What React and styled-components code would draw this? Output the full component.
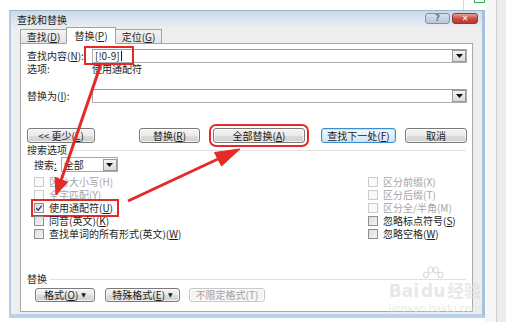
import styled, { createGlobalStyle } from 'styled-components';

const GlobalStyle = createGlobalStyle`
  html, body {
    margin: 0;
    padding: 0;
    background: #ffffff;
  }
  body {
    font-family: "Noto Sans CJK SC", "Noto Sans", sans-serif;
    font-size: 10px;
    color: #1e1e1e;
  }
`;

const leftChecks = [
  { text: '区分大小写', key: 'H', disabled: true },
  { text: '全字匹配', key: 'Y', disabled: true },
  { text: '使用通配符', key: 'U', checked: true, marked: true },
  { text: '同音(英文)', key: 'K' },
  { text: '查找单词的所有形式(英文)', key: 'W' },
];

const rightChecks = [
  { text: '区分前缀', key: 'X', disabled: true },
  { text: '区分后缀', key: 'T', disabled: true },
  { text: '区分全/半角', key: 'M', disabled: true },
  { text: '忽略标点符号', key: 'S' },
  { text: '忽略空格', key: 'W' },
];

const Check = ({ item }) => (
  <CheckRow $disabled={item.disabled} $marked={item.marked}>
    <Box $disabled={item.disabled}>{item.checked ? <Tick /> : null}</Box>
    <span>
      {item.text}(
      {item.disabled ? item.key : <u>{item.key}</u>})
    </span>
  </CheckRow>
);

const Tick = () => (
  <svg width="8" height="8" viewBox="0 0 8 8">
    <path d="M1.2 4.2 L3.2 6.2 L6.8 1.6" fill="none" stroke="#2b3f6b" strokeWidth="1.3" />
  </svg>
);

const DropButton = () => (
  <Drop>
    <svg width="7" height="4" viewBox="0 0 7 4">
      <path d="M0 0 H7 L3.5 4 Z" fill="#111" />
    </svg>
  </Drop>
);

const App = () => {
  return (
    <Page>
      <GlobalStyle />
      <LeftGap />
      <Center>
        <TopStrip>
          <StripLine />
          <GreenMark />
        </TopStrip>

        <Window>
          <TitleBar>
            <Title>查找和替换</Title>
            <Caption>
              <HelpBtn>?</HelpBtn>
              <CloseBtn>✕</CloseBtn>
            </Caption>
          </TitleBar>

          <Client>
            <Tabs>
              <Tab>
                查找(<u>D</u>)
              </Tab>
              <Tab $active>
                替换(<u>P</u>)
              </Tab>
              <Tab>
                定位(<u>G</u>)
              </Tab>
            </Tabs>

            <Panel>
              <FieldRow $top={5}>
                <FieldLabel>
                  查找内容(<u>N</u>):
                </FieldLabel>
                <Combo>
                  <ComboText>
                    <Marked>[!0-9]</Marked>
                    <Caret />
                  </ComboText>
                  <DropButton />
                </Combo>
              </FieldRow>

              <OptionsRow>
                <FieldLabel>选项:</FieldLabel>
                <OptionValue>使用通配符</OptionValue>
              </OptionsRow>

              <FieldRow $top={14}>
                <FieldLabel>
                  替换为(<u>I</u>):
                </FieldLabel>
                <Combo>
                  <ComboText />
                  <DropButton />
                </Combo>
              </FieldRow>

              <ButtonRow>
                <Button $w={68}>
                  &lt;&lt; 更少(<u>L</u>)
                </Button>
                <Button $w={61} $gap={44}>
                  替换(<u>R</u>)
                </Button>
                <Button $w={92} $gap={13} $marked>
                  全部替换(<u>A</u>)
                </Button>
                <Button $w={75} $gap={16} $default>
                  查找下一处(<u>F</u>)
                </Button>
                <Button $w={62} $gap={9}>
                  取消
                </Button>
              </ButtonRow>

              <Section $top={1}>
                <span>搜索选项</span>
              </Section>

              <SearchRow>
                <span>
                  搜索<u>:</u>
                </span>
                <Select>
                  <SelectText>全部</SelectText>
                  <DropButton />
                </Select>
              </SearchRow>

              <CheckGrid>
                {leftChecks.map((item, i) => (
                  <Pair key={item.text}>
                    <Check item={item} />
                    <Check item={rightChecks[i]} />
                  </Pair>
                ))}
              </CheckGrid>

              <Section $top={33}>
                <span>替换</span>
              </Section>

              <BottomRow>
                <Button $w={60} $h={14}>
                  格式(<u>O</u>) <Arrow>▼</Arrow>
                </Button>
                <Button $w={75} $h={14} $gap={10}>
                  特殊格式(<u>E</u>) <Arrow>▼</Arrow>
                </Button>
                <Button $w={76} $h={14} $gap={9} $disabled>
                  不限定格式(T)
                </Button>
              </BottomRow>
            </Panel>
          </Client>
        </Window>
      </Center>

      <RightStrip>
        <RightLight />
        <RightLine />
        <RightGray />
      </RightStrip>

      <Watermark>
        <MarkTop>
          <span>Bai</span>
          <Paw>
            <svg width="26" height="16" viewBox="0 0 26 16">
              <g fill="none" stroke="#d2d2d2" strokeWidth="1">
                <ellipse cx="6" cy="9" rx="2.5" ry="3" />
                <ellipse cx="10.5" cy="4" rx="2.5" ry="3.2" />
                <ellipse cx="16" cy="4" rx="2.5" ry="3.2" />
                <ellipse cx="20.5" cy="9" rx="2.5" ry="3" />
              </g>
            </svg>
            <span>du</span>
          </Paw>
          <span>经验</span>
        </MarkTop>
        <MarkUrl>jingyan.baidu.com</MarkUrl>
      </Watermark>

      <Arrows width="506" height="322" viewBox="0 0 506 322">
        <g fill="#e52a26" stroke="#e52a26">
          <line x1="101" y1="64" x2="61.2" y2="180" strokeWidth="3" />
          <polygon points="56,195 67.5,182 55,177.5" strokeWidth="1" />
          <line x1="128" y1="201" x2="218" y2="159" strokeWidth="3" />
          <polygon points="240,149 221.5,166 214.5,152.5" strokeWidth="1" />
        </g>
      </Arrows>
    </Page>
  );
};

export default App;

const Page = styled.div`
  position: relative;
  width: 506px;
  height: 322px;
  display: flex;
  overflow: hidden;
  background: #ffffff;
`;

const LeftGap = styled.div`
  width: 9px;
  flex: none;
`;

const Center = styled.div`
  width: 476px;
  flex: none;
  display: flex;
  flex-direction: column;
`;

const TopStrip = styled.div`
  height: 10px;
  display: flex;
  align-items: flex-start;
  padding-left: 454px;
`;

const StripLine = styled.div`
  width: 1px;
  height: 10px;
  background: #d6d6d6;
`;

const GreenMark = styled.div`
  margin-left: 10px;
  width: 9px;
  height: 2px;
  border: 1px solid #36b152;
  border-top: none;
`;

const Window = styled.div`
  height: 308px;
  box-sizing: border-box;
  border: 1px solid #8fa9c9;
  border-top-color: #9db4cf;
  border-bottom: 4px solid #bcd2ec;
  border-left: 2px solid #b4cbe6;
  border-right: 3px solid #a8c1df;
  background: #eeeeee;
  display: flex;
  flex-direction: column;
`;

const TitleBar = styled.div`
  height: 16px;
  display: flex;
  align-items: center;
  justify-content: space-between;
  padding: 0 4px 0 6px;
  background: linear-gradient(#cbd9ea, #dce6f2 60%, #ececec);
`;

const Title = styled.div`
  font-size: 10px;
  line-height: 12px;
  color: #1a1a1a;
  margin-top: 2px;
`;

const Caption = styled.div`
  display: flex;
  gap: 2px;
  align-self: flex-start;
  margin-top: 2px;
`;

const CapBtn = styled.div`
  height: 11px;
  box-sizing: border-box;
  border-radius: 3px;
  display: flex;
  align-items: center;
  justify-content: center;
  font-family: "DejaVu Sans", sans-serif;
  font-size: 8px;
  line-height: 1;
`;

const HelpBtn = styled(CapBtn)`
  width: 25px;
  border: 1px solid #7d93ad;
  background: linear-gradient(#d6e1ee, #b7c8dc);
  color: #5d6f86;
  font-weight: bold;
`;

const CloseBtn = styled(CapBtn)`
  width: 26px;
  border: 1px solid #8c3a35;
  background: linear-gradient(#e8a394, #c9473b 55%, #b93a2d);
  color: #ffffff;
  font-weight: bold;
`;

const Client = styled.div`
  flex: 1;
  display: flex;
  flex-direction: column;
  padding: 0 9px 0 9px;
`;

const Tabs = styled.div`
  height: 17px;
  display: flex;
  align-items: flex-end;
  position: relative;
  z-index: 1;
  margin-bottom: -1px;
`;

const Tab = styled.div`
  box-sizing: border-box;
  width: ${(p) => (p.$active ? '50px' : '47px')};
  height: ${(p) => (p.$active ? '17px' : '15px')};
  margin-left: ${(p) => (p.$active ? '-1px' : '0')};
  margin-right: ${(p) => (p.$active ? '-1px' : '0')};
  border: 1px solid #a3a3a3;
  border-bottom: ${(p) => (p.$active ? '1px solid #ffffff' : '1px solid #a3a3a3')};
  background: ${(p) => (p.$active ? '#ffffff' : 'linear-gradient(#f4f4f4, #e3e3e3)')};
  display: flex;
  align-items: center;
  justify-content: center;
  line-height: 12px;
  position: relative;
  z-index: ${(p) => (p.$active ? 2 : 1)};
`;

const Panel = styled.div`
  height: 269px;
  box-sizing: border-box;
  background: #ffffff;
  border: 1px solid #a8a8a8;
  padding: 0 5px 0 6px;
  display: flex;
  flex-direction: column;
`;

const FieldRow = styled.div`
  margin-top: ${(p) => p.$top}px;
  height: 14px;
  display: flex;
  align-items: center;
`;

const FieldLabel = styled.div`
  width: 65px;
  flex: none;
  line-height: 12px;
`;

const Combo = styled.div`
  flex: 1;
  height: 14px;
  box-sizing: border-box;
  border: 1px solid #acacac;
  border-top-color: #9c9c9c;
  display: flex;
  align-items: center;
  background: #ffffff;
`;

const ComboText = styled.div`
  flex: 1;
  display: flex;
  align-items: center;
  padding-left: 2px;
  line-height: 12px;
`;

const Marked = styled.span`
  position: relative;
  &::after {
    content: '';
    position: absolute;
    left: -11px;
    right: -14px;
    top: -4px;
    bottom: -3px;
    border: 2px solid #e52a26;
  }
`;

const Caret = styled.span`
  width: 1px;
  height: 10px;
  background: #111;
  margin-left: 1px;
`;

const Drop = styled.div`
  width: 14px;
  height: 12px;
  box-sizing: border-box;
  border: 1px solid #9a9a9a;
  background: linear-gradient(#f3f3f3, #dadada);
  display: flex;
  align-items: center;
  justify-content: center;
`;

const OptionsRow = styled.div`
  height: 12px;
  display: flex;
  align-items: center;
  line-height: 12px;
`;

const OptionValue = styled.div`
  color: #222;
`;

const ButtonRow = styled.div`
  margin-top: 25px;
  display: flex;
  align-items: center;
`;

const Button = styled.div`
  width: ${(p) => p.$w}px;
  height: ${(p) => p.$h || 15}px;
  margin-left: ${(p) => p.$gap || 0}px;
  flex: none;
  box-sizing: border-box;
  border: 1px solid ${(p) => (p.$default ? '#3d8fcf' : p.$disabled ? '#c7c7c7' : '#7a7a7a')};
  border-radius: 3px;
  background: ${(p) =>
    p.$disabled
      ? '#f4f4f4'
      : p.$default
        ? 'linear-gradient(#f2f8fc, #e3eef7 50%, #d6e6f2)'
        : 'linear-gradient(#f4f4f4, #ebebeb 50%, #dddddd 51%, #cfcfcf)'};
  box-shadow: ${(p) => (p.$default ? 'inset 0 0 0 1px #b9e2fb' : 'inset 0 0 0 1px rgba(255,255,255,0.7)')};
  color: ${(p) => (p.$disabled ? '#a3a3a3' : '#1a1a1a')};
  display: flex;
  align-items: center;
  justify-content: center;
  line-height: 12px;
  white-space: nowrap;
  outline: ${(p) => (p.$marked ? '2px solid #e52a26' : 'none')};
  outline-offset: 2px;
`;

const Arrow = styled.span`
  font-family: "DejaVu Sans", sans-serif;
  font-size: 6px;
  margin-left: 3px;
`;

const Section = styled.div`
  margin-top: ${(p) => p.$top}px;
  height: 12px;
  display: flex;
  align-items: center;
  line-height: 12px;
  padding-right: 1px;
  &::after {
    content: '';
    flex: 1;
    height: 1px;
    margin-left: 3px;
    background: #e0e0e0;
  }
`;

const SearchRow = styled.div`
  margin-top: 1px;
  height: 15px;
  display: flex;
  align-items: center;
  padding-left: 7px;
  gap: 4px;
  line-height: 12px;
`;

const Select = styled.div`
  width: 57px;
  height: 15px;
  box-sizing: border-box;
  border: 1px solid #a8a8a8;
  display: flex;
  align-items: center;
  background: #ffffff;
`;

const SelectText = styled.div`
  flex: 1;
  padding-left: 2px;
`;

const CheckGrid = styled.div`
  margin-top: 3px;
  display: flex;
  flex-direction: column;
`;

const Pair = styled.div`
  height: 13px;
  display: grid;
  grid-template-columns: 334px auto;
  padding-left: 7px;
  align-items: center;
`;

const CheckRow = styled.div`
  display: flex;
  align-items: center;
  gap: 5px;
  line-height: 12px;
  justify-self: start;
  color: ${(p) => (p.$disabled ? '#a5a5a5' : '#1e1e1e')};
  outline: ${(p) => (p.$marked ? '2px solid #e52a26' : 'none')};
  outline-offset: 1px;
  padding-right: ${(p) => (p.$marked ? '3px' : '0')};
`;

const Box = styled.div`
  width: 10px;
  height: 10px;
  box-sizing: border-box;
  border: 1px solid ${(p) => (p.$disabled ? '#cbcbcb' : '#8e8f8f')};
  background: ${(p) => (p.$disabled ? '#fafafa' : 'linear-gradient(135deg, #dcdcdc, #f6f6f6)')};
  display: flex;
  align-items: center;
  justify-content: center;
`;

const BottomRow = styled.div`
  margin-top: 3px;
  display: flex;
  align-items: center;
  padding-left: 8px;
`;

const RightStrip = styled.div`
  width: 21px;
  flex: none;
  display: flex;
`;

const RightLight = styled.div`
  width: 11px;
  background: #f7f7f7;
`;

const RightLine = styled.div`
  width: 1px;
  background: #cfcfcf;
`;

const RightGray = styled.div`
  flex: 1;
  background: #ececec;
`;

const Watermark = styled.div`
  position: absolute;
  left: 388px;
  top: 266px;
  width: 94px;
  display: flex;
  flex-direction: column;
  align-items: center;
  color: rgba(222, 222, 222, 0.7);
  font-family: "DejaVu Sans", sans-serif;
  pointer-events: none;
`;

const MarkTop = styled.div`
  display: flex;
  align-items: flex-end;
  font-size: 17px;
  line-height: 18px;
  font-weight: bold;
  span {
    font-family: "DejaVu Sans", "Noto Sans CJK SC", sans-serif;
  }
`;

const Paw = styled.div`
  display: flex;
  flex-direction: column;
  align-items: center;
  margin: 0 1px;
`;

const MarkUrl = styled.div`
  margin-top: 3px;
  font-size: 10px;
  line-height: 11px;
`;

const Arrows = styled.svg`
  position: absolute;
  left: 0;
  top: 0;
  pointer-events: none;
`;
